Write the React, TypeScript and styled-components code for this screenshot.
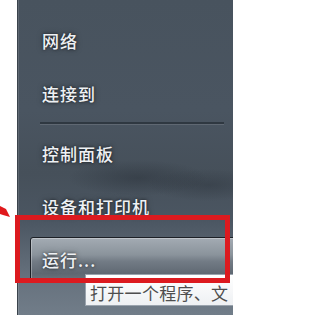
import styled, { createGlobalStyle } from "styled-components";

const GlobalStyle = createGlobalStyle`
  html, body {
    margin: 0;
    padding: 0;
    background: #ffffff;
  }
  body {
    font-family: "Noto Sans CJK SC", "Noto Sans", sans-serif;
  }
`;

interface MenuItemData {
  label: string;
  active?: boolean;
}

const topItems: MenuItemData[] = [{ label: "网络" }, { label: "连接到" }];
const bottomItems: MenuItemData[] = [
  { label: "控制面板" },
  { label: "设备和打印机" },
  { label: "运行...", active: true },
];

const MenuItem: React.FC<MenuItemData> = ({ label, active }) => (
  <StyledItem $active={active}>
    <StyledLabel>{label}</StyledLabel>
  </StyledItem>
);

const App = () => {
  return (
    <>
      <GlobalStyle />
      <StyledPage>
        <StyledGutter />
        <StyledPanel>
          {topItems.map((item) => (
            <MenuItem key={item.label} {...item} />
          ))}
          <StyledSeparator />
          {bottomItems.map((item) => (
            <MenuItem key={item.label} {...item} />
          ))}
        </StyledPanel>

        <StyledTooltip>打开一个程序、文</StyledTooltip>
        <StyledHighlight />
        <StyledArrow width="12" height="14" viewBox="0 0 12 14">
          <polygon points="0,0 6,3 10,11 3,9 0,8" fill="#e0191c" />
        </StyledArrow>
      </StyledPage>
    </>
  );
};

export default App;

const StyledPage = styled.div`
  position: relative;
  display: flex;
  width: 233px;
  height: 315px;
  overflow: hidden;
  background: #ffffff;
`;

const StyledGutter = styled.div`
  width: 17px;
  flex-shrink: 0;
  background: #ffffff;
`;

const StyledPanel = styled.div`
  flex: 1;
  display: flex;
  flex-direction: column;
  padding-top: 14px;
  border-left: 1px solid #3a434c;
  box-shadow: inset 1px 0 0 rgba(255, 255, 255, 0.12);
  background:
    radial-gradient(ellipse 70px 18px at 120px 178px, rgba(30, 36, 44, 0.35), transparent),
    radial-gradient(ellipse 60px 16px at 190px 185px, rgba(30, 36, 44, 0.3), transparent),
    linear-gradient(
      180deg,
      #48535e 0%,
      #4a5561 35%,
      #46505a 55%,
      #4b5662 70%,
      #66717d 88%,
      #717d89 100%
    );
`;

const StyledItem = styled.div<{ $active?: boolean }>`
  display: flex;
  align-items: center;
  height: ${({ $active }) => ($active ? "42px" : "51px")};
  margin: ${({ $active }) => ($active ? "4px -3px 0 12px" : "0 0 0 12px")};
  padding-left: 11px;
  border: 1px solid ${({ $active }) => ($active ? "#1c2026" : "transparent")};
  border-radius: 3px;
  background: ${({ $active }) =>
    $active
      ? "linear-gradient(180deg, #a3abb3 0%, #8a939b 40%, #737c86 55%, #5f6872 85%, #6a737d 100%)"
      : "transparent"};
  box-shadow: ${({ $active }) =>
    $active ? "inset 0 0 0 1px rgba(255, 255, 255, 0.3)" : "none"};
`;

const StyledLabel = styled.span`
  color: #eef1f4;
  font-size: 17px;
  font-weight: 500;
  letter-spacing: 1px;
  line-height: 1;
  text-shadow: 0 0 3px rgba(0, 0, 0, 0.6), 0 0 6px rgba(0, 0, 0, 0.35);
  white-space: nowrap;
`;

const StyledSeparator = styled.div`
  height: 2px;
  margin: 2px 9px 3px 22px;
  background: #2f3841;
  box-shadow: 0 1px 0 rgba(255, 255, 255, 0.12);
`;

const StyledTooltip = styled.div`
  position: absolute;
  left: 85px;
  top: 274px;
  width: 160px;
  height: 32px;
  box-sizing: border-box;
  padding: 9px 0 0 4px;
  background: linear-gradient(180deg, #ffffff 0%, #eef0f3 100%);
  border: 1px solid #9aa3ad;
  color: #4e4e4e;
  font-size: 17px;
  letter-spacing: 0.3px;
  line-height: 1;
  white-space: nowrap;
`;

const StyledHighlight = styled.div`
  position: absolute;
  left: 15px;
  top: 215px;
  width: 215px;
  height: 68px;
  box-sizing: border-box;
  border: 5px solid #dc1a1f;
`;

const StyledArrow = styled.svg`
  position: absolute;
  left: 0;
  top: 206px;
`;
